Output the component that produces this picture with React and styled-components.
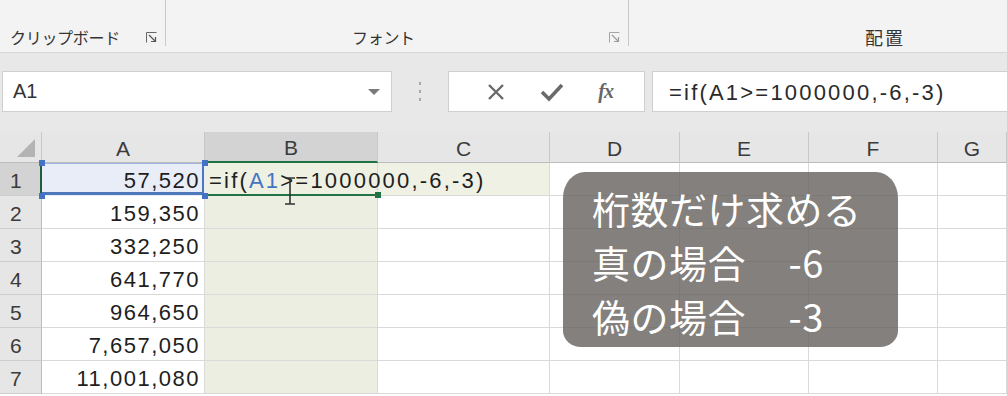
import React from 'react';
import styled, { createGlobalStyle, css } from 'styled-components';

const GlobalStyle = createGlobalStyle`
    html, body {
        margin: 0;
        padding: 0;
        background: #ffffff;
    }
    * {
        box-sizing: border-box;
    }
`

const Page = styled.div`
    width: 1007px;
    height: 396px;
    overflow: hidden;
    font-family: "Liberation Sans", Arial, sans-serif;
    color: #222;
    position: relative;
`

const Ribbon = styled.div`
    height: 53px;
    background: #f3f3f3;
    border-bottom: 1px solid #d6d6d6;
    display: flex;
    align-items: flex-start;
`

const Group = styled.div`
    width: ${p => p.width ? `${p.width}px` : 'auto'};
    flex: ${p => p.width ? 'none' : '1'};
    height: 46px;
    display: flex;
    align-items: flex-end;
    border-right: ${p => p.last ? 'none' : '1px solid #c9c9c9'};
    padding-left: ${p => p.offset}px;
    padding-right: 7px;
`

const GroupLabel = styled.span`
    font-family: "Noto Sans CJK JP", sans-serif;
    font-size: ${p => p.big ? '18px' : '16px'};
    line-height: 20px;
    color: #333;
    letter-spacing: ${p => p.big ? '2px' : '-0.3px'};
    margin-bottom: -1px;
`

const Launcher = styled.svg`
    margin-left: auto;
    margin-bottom: 2px;
    width: 13px;
    height: 13px;
    opacity: ${p => p.faint ? 0.55 : 1};
`

const FormulaBar = styled.div`
    height: 79px;
    background: #e8e8e8;
    display: flex;
    align-items: flex-start;
    padding-top: 18px;
`

const Box = styled.div`
    height: 41px;
    background: #fff;
    border: 1px solid #cfcfcf;
    display: flex;
    align-items: center;
`

const NameBox = styled(Box)`
    width: 390px;
    margin-left: 2px;
    padding: 0 10px;
    font-size: 20px;
    color: #333;
    justify-content: space-between;
`

const DropArrow = styled.span`
    width: 0;
    height: 0;
    border-left: 6px solid transparent;
    border-right: 6px solid transparent;
    border-top: 6px solid #7a7a7a;
    margin-right: 1px;
`

const Grip = styled.div`
    width: 56px;
    height: 41px;
    display: flex;
    flex-direction: column;
    align-items: center;
    justify-content: center;
    gap: 5px;

    span {
        width: 2px;
        height: 3px;
        background: #a8a8a8;
    }
`

const ButtonBox = styled(Box)`
    width: 197px;
    justify-content: space-around;
    padding: 0 14px 0 20px;
`

const FxLabel = styled.span`
    font-family: "Liberation Serif", "Times New Roman", serif;
    font-style: italic;
    font-weight: bold;
    font-size: 20px;
    color: #666;
    letter-spacing: -1px;
`

const FormulaInput = styled(Box)`
    flex: 1;
    margin-left: 7px;
    border-right: none;
    padding-left: 16px;
    font-size: 22px;
    letter-spacing: 2.2px;
    color: #2a2a2a;
    padding-top: 2px;
`

const Sheet = styled.div`
    position: relative;
`

const Grid = styled.div`
    display: grid;
    grid-template-columns: 42px 163px 173px 172px 130px 129px 129px 1fr;
    grid-template-rows: 31px repeat(7, 33px);
`

const HeadCell = styled.div`
    background: ${p => p.selected ? '#d3d3d3' : '#e6e6e6'};
    border-right: 1px solid #c8c8c8;
    border-bottom: ${p => p.selected ? '2px solid #217346' : '1px solid #bcbcbc'};
    display: flex;
    align-items: center;
    justify-content: center;
    font-size: 21px;
    color: #3b3b3b;
    padding-top: 3px;
    position: relative;
`

const Corner = styled(HeadCell)`
    align-items: flex-end;
    justify-content: flex-end;
    padding: 0 6px 5px 0;
`

const RowHead = styled.div`
    background: ${p => p.selected ? '#d3d3d3' : '#e6e6e6'};
    border-right: ${p => p.selected ? '2px solid #1f5f3c' : '1px solid #bcbcbc'};
    border-bottom: 1px solid #cdcdcd;
    display: flex;
    align-items: center;
    padding: 3px 0 0 10px;
    font-size: 21px;
    color: #3b3b3b;
`

const Cell = styled.div`
    position: relative;
    background: ${p => p.tint || '#fff'};
    border-right: 1px solid #d9d9d9;
    border-bottom: 1px solid #d9d9d9;
    display: flex;
    align-items: center;
    justify-content: ${p => p.right ? 'flex-end' : 'flex-start'};
    padding: 4px 4px 0 4px;
    font-size: 22px;
    letter-spacing: ${p => p.active ? '2.2px' : '1.5px'};
    color: #1e1e1e;
    white-space: nowrap;
    overflow: visible;

    ${p => p.highlight && css`
        background: #e8edf7;
        border-right-color: transparent;
        border-bottom-color: transparent;
        box-shadow: inset 0 -3px 0 #4f77bb, inset -2px 0 0 #4f77bb, inset 0 1px 0 #9fb6de;
    `}

    ${p => p.active && css`
        border-bottom: 2px solid #217346;
        z-index: 2;
    `}
`

const Handle = styled.span`
    position: absolute;
    width: 6px;
    height: 6px;
    background: ${p => p.green ? '#217346' : '#4472c4'};
    ${p => p.top ? 'top: -3px;' : 'bottom: -4px;'}
    ${p => p.left ? 'left: -3px;' : 'right: -4px;'}
    z-index: 3;
`

const RefText = styled.span`
    color: #4472c4;
`

const Overflow = styled.span`
    position: relative;
    z-index: 3;
`

const Callout = styled.div`
    position: absolute;
    left: 563px;
    top: 40px;
    width: 335px;
    height: 175px;
    border-radius: 22px 22px 18px 18px / 26px 26px 16px 16px;
    background: rgba(104, 100, 96, 0.82);
    padding: 9px 0 0 29px;
    font-family: "Noto Sans CJK JP", sans-serif;
    font-size: 38px;
    line-height: 54px;
    color: #fff;
    letter-spacing: 0.5px;
    z-index: 4;
`

const Value = styled.span`
    margin-left: 4px;
`

const Cursor = styled.svg`
    position: absolute;
    left: 283px;
    top: 44px;
    z-index: 5;
`

const columns = ['A', 'B', 'C', 'D', 'E', 'F', 'G'];
const values = ['57,520', '159,350', '332,250', '641,770', '964,650', '7,657,050', '11,001,080'];

const LauncherIcon = ({ faint }) => (
    <Launcher faint={faint} viewBox="0 0 13 13">
        <path d="M1.5 11.5 V1.5 H11.5" fill="none" stroke="#666" strokeWidth="1" />
        <path d="M4 4 L10.5 10.5 M6 10.5 H10.5 V6" fill="none" stroke="#555" strokeWidth="1.2" />
    </Launcher>
)

const App = () => {
    return (
        <Page>
            <GlobalStyle />
            <Ribbon>
                <Group width={166} offset={10}>
                    <GroupLabel>クリップボード</GroupLabel>
                    <LauncherIcon />
                </Group>
                <Group width={463} offset={186}>
                    <GroupLabel>フォント</GroupLabel>
                    <LauncherIcon faint />
                </Group>
                <Group last offset={236}>
                    <GroupLabel big>配置</GroupLabel>
                </Group>
            </Ribbon>

            <FormulaBar>
                <NameBox>
                    <span>A1</span>
                    <DropArrow />
                </NameBox>
                <Grip><span /><span /><span /></Grip>
                <ButtonBox>
                    <svg width="20" height="20" viewBox="0 0 20 20">
                        <path d="M3 3 L17 17 M17 3 L3 17" stroke="#6a6a6a" strokeWidth="2.4" />
                    </svg>
                    <svg width="24" height="20" viewBox="0 0 24 20">
                        <path d="M2 10 L9 17 L22 3" fill="none" stroke="#6a6a6a" strokeWidth="3.6" />
                    </svg>
                    <FxLabel>fx</FxLabel>
                </ButtonBox>
                <FormulaInput>=if(A1&gt;=1000000,-6,-3)</FormulaInput>
            </FormulaBar>

            <Sheet>
                <Grid>
                    <Corner>
                        <svg width="18" height="18" viewBox="0 0 18 18">
                            <path d="M18 0 V18 H0 Z" fill="#b4b4b4" />
                        </svg>
                    </Corner>
                    {columns.map(c => (
                        <HeadCell key={c} selected={c === 'B'}>{c}</HeadCell>
                    ))}

                    {values.map((v, i) => (
                        <React.Fragment key={v}>
                            <RowHead selected={i === 0}>{i + 1}</RowHead>
                            <Cell right highlight={i === 0}>
                                {v}
                                {i === 0 && (
                                    <>
                                        <Handle top left />
                                        <Handle top />
                                        <Handle left />
                                        <Handle />
                                    </>
                                )}
                            </Cell>
                            {i === 0 ? (
                                <Cell active tint="#eef0e2">
                                    <Overflow>
                                        =if(<RefText>A1</RefText>&gt;=1000000,-6,-3)
                                    </Overflow>
                                    <Handle green />
                                </Cell>
                            ) : (
                                <Cell tint="#ebeee0" />
                            )}
                            <Cell tint={i === 0 ? '#eef1e4' : undefined} />
                            <Cell />
                            <Cell />
                            <Cell />
                            <Cell />
                        </React.Fragment>
                    ))}
                </Grid>

                <Cursor width="14" height="30" viewBox="0 0 14 30">
                    <path d="M2 2 H12 M7 2 V28 M2 28 H12" stroke="#333" strokeWidth="1.6" fill="none" />
                </Cursor>

                <Callout>
                    <div>桁数だけ求める</div>
                    <div>真の場合　<Value>-6</Value></div>
                    <div>偽の場合　<Value>-3</Value></div>
                </Callout>
            </Sheet>
        </Page>
    )
}

export default App
